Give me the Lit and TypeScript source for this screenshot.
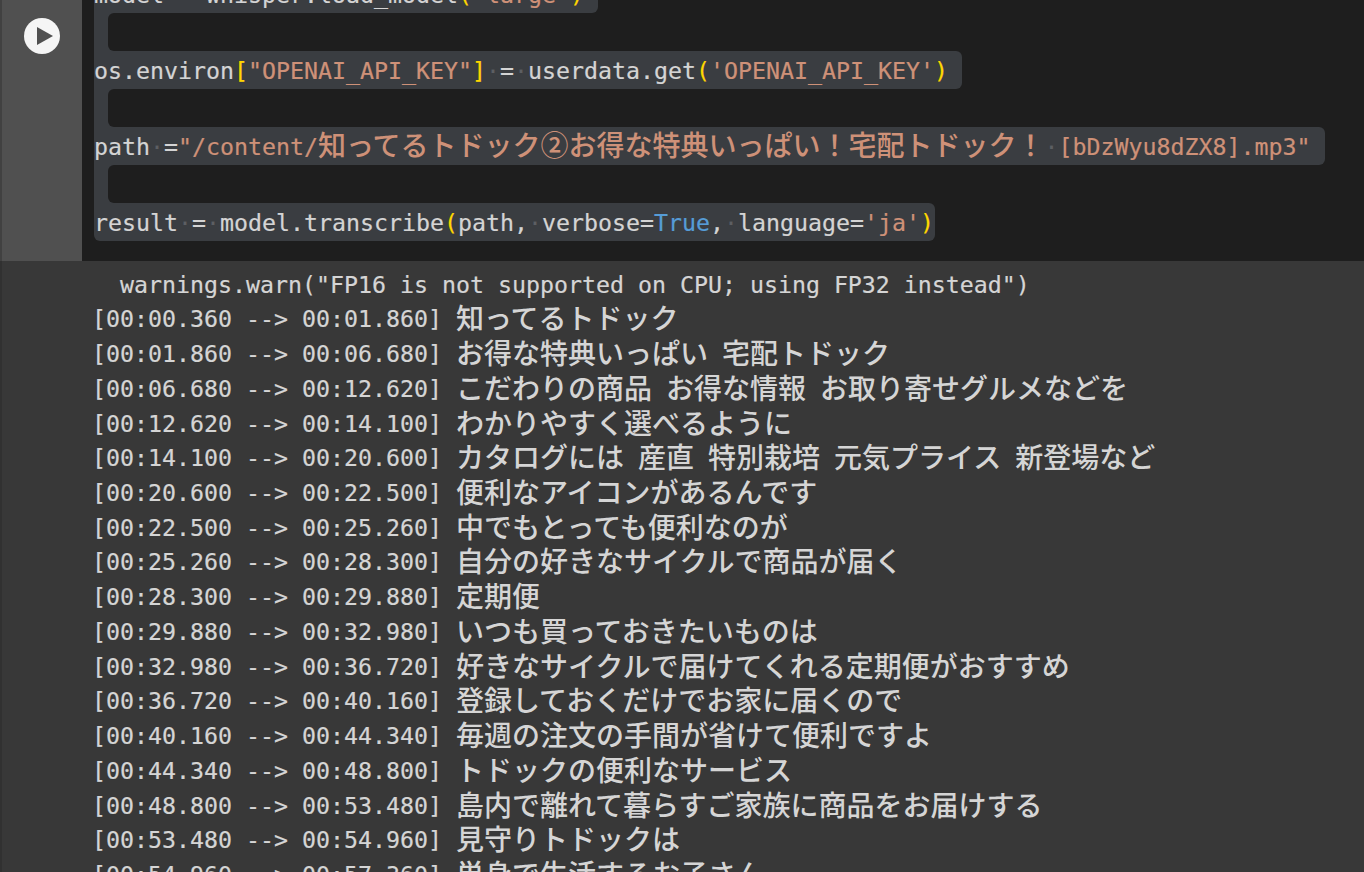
import { LitElement, html, css, TemplateResult } from "lit";
import { customElement } from "lit/decorators.js";

type Tok = [string, string];

const CJK = /([\u2460-\u24ff\u3000-\u30ff\u3400-\u9fff\uff00-\uffef]+)/;

function runs(text: string, dots: boolean): (TemplateResult | string)[] {
  return text.split(CJK).filter((r) => r.length > 0).flatMap((r) => {
    if (CJK.test(r)) return [html`<span class="cjk">${r}</span>`];
    if (!dots) return [r];
    return r.split(/( )/).filter((p) => p.length > 0).map((p) =>
      p === " " ? html`<span class="dot">·</span>` : p
    );
  });
}

const CODE: { toks: Tok[]; cls: string }[] = [
  {
    cls: "first",
    toks: [
      ["", "model = whisper.load_model"],
      ["b", "("],
      ["s", '"large"'],
      ["b", ")"],
    ],
  },
  { cls: "gap", toks: [] },
  {
    cls: "mid",
    toks: [
      ["", "os.environ"],
      ["b", "["],
      ["s", '"OPENAI_API_KEY"'],
      ["b", "]"],
      ["", " = userdata.get"],
      ["b", "("],
      ["s", "'OPENAI_API_KEY'"],
      ["b", ")"],
    ],
  },
  { cls: "gap", toks: [] },
  {
    cls: "mid",
    toks: [
      ["", "path ="],
      ["s", '"/content/知ってるトドック②お得な特典いっぱい！宅配トドック！ [bDzWyu8dZX8].mp3"'],
    ],
  },
  { cls: "gap", toks: [] },
  {
    cls: "last",
    toks: [
      ["", "result = model.transcribe"],
      ["b", "("],
      ["", "path, verbose="],
      ["k", "True"],
      ["", ", language="],
      ["s", "'ja'"],
      ["b", ")"],
    ],
  },
];

const OUTPUT: string[] = [
  '  warnings.warn("FP16 is not supported on CPU; using FP32 instead")',
  "[00:00.360 --> 00:01.860] 知ってるトドック",
  "[00:01.860 --> 00:06.680] お得な特典いっぱい 宅配トドック",
  "[00:06.680 --> 00:12.620] こだわりの商品 お得な情報 お取り寄せグルメなどを",
  "[00:12.620 --> 00:14.100] わかりやすく選べるように",
  "[00:14.100 --> 00:20.600] カタログには 産直 特別栽培 元気プライス 新登場など",
  "[00:20.600 --> 00:22.500] 便利なアイコンがあるんです",
  "[00:22.500 --> 00:25.260] 中でもとっても便利なのが",
  "[00:25.260 --> 00:28.300] 自分の好きなサイクルで商品が届く",
  "[00:28.300 --> 00:29.880] 定期便",
  "[00:29.880 --> 00:32.980] いつも買っておきたいものは",
  "[00:32.980 --> 00:36.720] 好きなサイクルで届けてくれる定期便がおすすめ",
  "[00:36.720 --> 00:40.160] 登録しておくだけでお家に届くので",
  "[00:40.160 --> 00:44.340] 毎週の注文の手間が省けて便利ですよ",
  "[00:44.340 --> 00:48.800] トドックの便利なサービス",
  "[00:48.800 --> 00:53.480] 島内で離れて暮らすご家族に商品をお届けする",
  "[00:53.480 --> 00:54.960] 見守りトドックは",
  "[00:54.960 --> 00:57.360] 単身で生活するお子さん",
];

const CLIPPED =
  "/usr/local/lib/python3.10/dist-packages/whisper/transcribe.py:115: UserWarning: FP16 is not supported on CPU; using FP32 instead";

@customElement("app-root")
export class AppRoot extends LitElement {
  static styles = css`
    :host {
      display: block;
      width: 1364px;
      height: 872px;
      overflow: hidden;
      background: #383838;
      font-family: "DejaVu Sans Mono", "Noto Sans CJK JP", monospace;
      font-size: 23.25px;
      -webkit-text-stroke: 0.2px;
    }
    .cell {
      display: flex;
      height: 261px;
    }
    .gutter {
      box-sizing: border-box;
      width: 82px;
      flex: none;
      border-left: 2px solid #414141;
      background: #505050;
      padding: 18px 0 0 22px;
    }
    .play {
      display: block;
      width: 36px;
      height: 36px;
    }
    .code {
      flex: 1;
      min-width: 0;
      overflow: hidden;
      background: #1e1e1e;
      padding-left: 12px;
      color: #d4d4d4;
    }
    .lines {
      margin-top: -25px;
    }
    .row {
      height: 38px;
      line-height: 40px;
    }
    .sel {
      display: block;
      width: fit-content;
      height: 38px;
      padding-right: 14px;
      background: #3a3d41;
      white-space: pre;
    }
    .first .sel {
      border-bottom-right-radius: 6px;
    }
    .mid .sel {
      border-top-right-radius: 6px;
      border-bottom-right-radius: 6px;
    }
    .last .sel {
      padding-right: 1px;
      border-radius: 0 6px 6px 6px;
    }
    .gap {
      background: #3a3d41;
    }
    .hole {
      height: 38px;
      margin-left: 14px;
      background: #1e1e1e;
      border-radius: 6px 0 0 6px;
    }
    .s {
      color: #ce9178;
    }
    .b {
      color: #ffd700;
    }
    .k {
      color: #569cd6;
    }
    .dot {
      color: #5c5f63;
      -webkit-text-stroke: 0;
    }
    .cjk {
      font-family: "Noto Sans CJK JP", sans-serif;
      font-size: 28px;
      font-weight: 500;
      line-height: 0;
      vertical-align: -1px;
      -webkit-text-stroke: 0;
    }
    .output {
      box-sizing: border-box;
      height: 611px;
      overflow: hidden;
      border-left: 2px solid #313131;
      padding-left: 90px;
      color: #d5d5d5;
    }
    .clipped {
      height: 6.73px;
      overflow: hidden;
      white-space: pre;
      line-height: 34.73px;
      color: #d5d5d5;
    }
    .clipped span {
      display: block;
      margin-top: -30px;
    }
    .out {
      height: 34.73px;
      line-height: 34.73px;
      white-space: pre;
    }
    .out .cjk {
      vertical-align: -2px;
    }
  `;

  render() {
    return html`
      <div class="cell">
        <div class="gutter">
          <svg class="play" viewBox="0 0 36 36">
            <circle cx="18" cy="18" r="18" fill="#f5f5f5"></circle>
            <polygon points="13,9 13,27 29,18" fill="#505050"></polygon>
          </svg>
        </div>
        <div class="code">
          <div class="lines">
            ${CODE.map((l) =>
              l.cls === "gap"
                ? html`<div class="row gap"><div class="hole"></div></div>`
                : html`<div class="row ${l.cls}"><span class="sel">${l.toks.map(
                    ([c, t]) => html`<span class=${c}>${runs(t, true)}</span>`
                  )}</span></div>`
            )}
          </div>
        </div>
      </div>
      <div class="output">
        <div class="clipped"><span>${CLIPPED}</span></div>
        ${OUTPUT.map((t) => html`<div class="out">${runs(t, false)}</div>`)}
      </div>
    `;
  }
}
